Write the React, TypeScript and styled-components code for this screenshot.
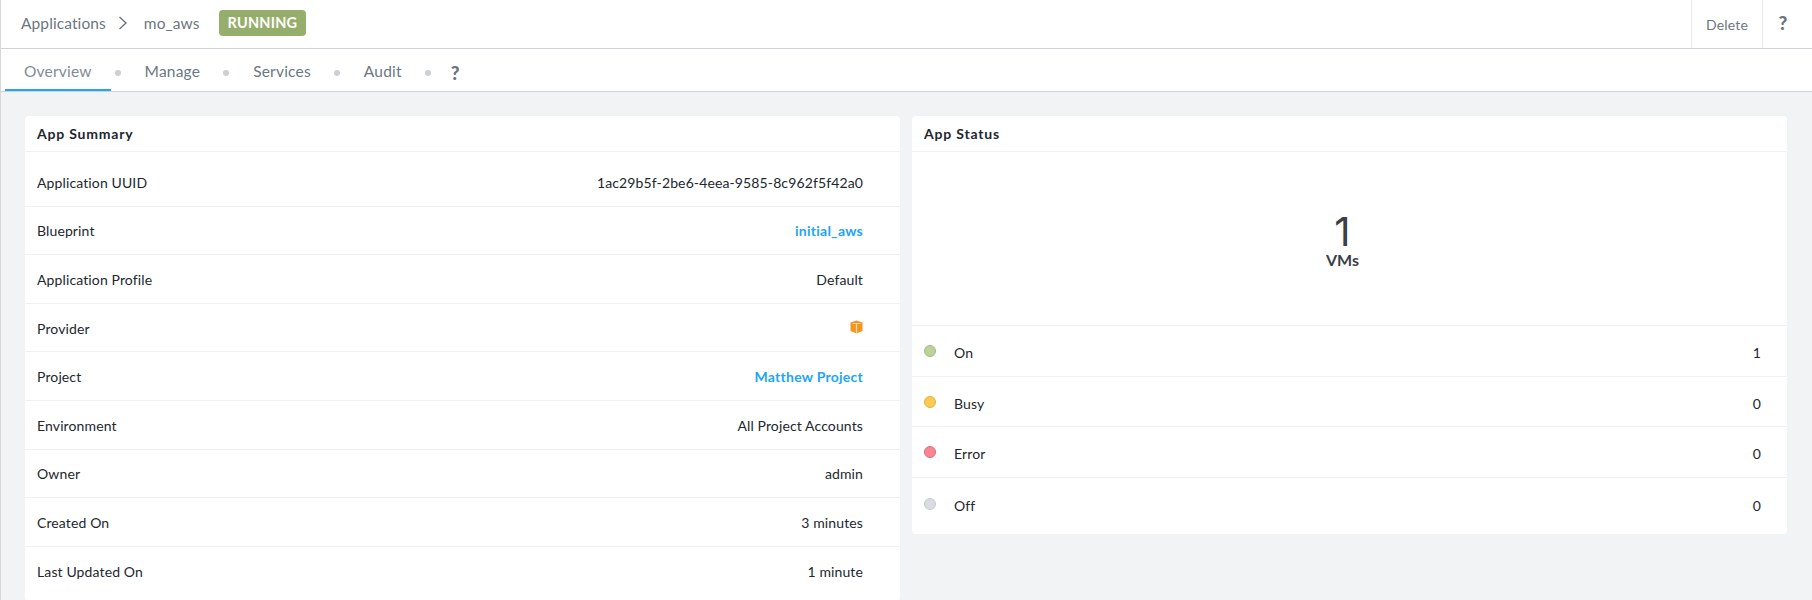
import React from 'react';
import styled, { createGlobalStyle } from 'styled-components';

const GlobalStyle = createGlobalStyle`
  html, body {
    margin: 0;
    padding: 0;
    height: 100%;
    overflow: hidden;
    background: #f2f3f5;
    font-family: Lato, "Open Sans", sans-serif;
  }
`;

const Page = styled.div`
  width: 1812px;
  height: 600px;
  overflow: hidden;
  border-left: 1px solid #d5d9dd;
  box-sizing: border-box;
`;

const TopBar = styled.div`
  display: flex;
  align-items: stretch;
  height: 49px;
  box-sizing: border-box;
  background: #fff;
  border-bottom: 1px solid #cfd3d7;
`;

const Crumbs = styled.div`
  display: flex;
  flex: 1;
  align-items: center;
  padding: 0 0 2px 20px;
  font-size: 15.5px;
  letter-spacing: 0.1px;
  color: #6c7680;
`;

const Chevron = styled.svg`
  width: 10px;
  height: 14px;
  margin: 0 16px 0 12px;
  fill: none;
  stroke: #6c7680;
  stroke-width: 1.4;
`;

const Badge = styled.span`
  margin-left: 19px;
  padding: 0 9px;
  height: 26px;
  line-height: 26px;
  border-radius: 4px;
  background: #96ae6c;
  color: #fff;
  font-size: 14.5px;
  font-weight: 700;
  letter-spacing: 0.2px;
`;

const TopAction = styled.div<{ $w: number; $shift?: number }>`
  display: flex;
  align-items: center;
  justify-content: center;
  width: ${(p) => p.$w}px;
  box-sizing: border-box;
  padding-right: ${(p) => p.$shift ?? 0}px;
  border-left: 1px solid #e8eaed;
  color: #6c7680;
  font-size: 14px;
  letter-spacing: 0.2px;
`;

const Help = styled.span`
  font-size: 19px;
  font-weight: 900;
  color: #6c7680;
  margin-bottom: 3px;
`;

const TabBar = styled.div`
  display: flex;
  align-items: stretch;
  height: 43px;
  box-sizing: border-box;
  padding-left: 4px;
  background: #fff;
  border-bottom: 1px solid #cfd3d7;
`;

const Tab = styled.div<{ $active?: boolean }>`
  display: flex;
  align-items: center;
  height: 42px;
  box-sizing: border-box;
  padding: 3px 19px 0;
  font-size: 15.5px;
  letter-spacing: 0.2px;
  color: ${(p) => (p.$active ? '#7f8b96' : '#6a7784')};
  border-bottom: ${(p) => (p.$active ? '2px solid #22a5f7' : '2px solid transparent')};
`;

const HelpTab = styled(Tab)`
  padding: 6px 0 0 15px;
  ${Help} {
    margin-bottom: 0;
  }
`;

const TabDot = styled.span`
  align-self: center;
  width: 6px;
  height: 6px;
  margin: 6px 5px 0 4px;
  border-radius: 50%;
  background: #ccd0d4;
`;

const Content = styled.div`
  display: grid;
  grid-template-columns: 875px 875px;
  gap: 12px;
  align-items: start;
  padding: 24px 0 0 24px;
`;

const Card = styled.div`
  background: #fff;
  border-radius: 4px;
`;

const CardTitle = styled.div`
  display: flex;
  align-items: center;
  height: 35px;
  padding: 0 12px;
  border-bottom: 1px solid #f0f1f3;
  font-size: 14px;
  font-weight: 700;
  letter-spacing: 0.8px;
  color: #22272e;
`;

const SummaryList = styled.div`
  padding-top: 6px;
`;

const SummaryRow = styled.div`
  display: flex;
  justify-content: space-between;
  align-items: center;
  height: 48.6px;
  box-sizing: border-box;
  padding: 1px 37px 0 12px;
  border-bottom: 1px solid #f0f1f3;
  font-size: 14px;
  letter-spacing: 0.12px;
  color: #22272e;
  &:last-child {
    height: 54px;
    padding-bottom: 5px;
    border-bottom: none;
  }
`;

const ValueLink = styled.span`
  color: #22a5f7;
  font-weight: 700;
  letter-spacing: 0.25px;
`;

const Total = styled.div`
  display: flex;
  flex-direction: column;
  align-items: center;
  justify-content: center;
  height: 174px;
  box-sizing: border-box;
  padding: 0 14px 3px 0;
  border-bottom: 1px solid #f0f1f3;
  color: #3a4046;
`;

const TotalValue = styled.div`
  padding-top: 10px;
  font-family: Inter, sans-serif;
  font-size: 40px;
  line-height: 36px;
  font-weight: 400;
`;

const TotalLabel = styled.div`
  font-size: 16px;
  font-weight: 700;
  line-height: 20px;
`;

const StatusRow = styled.div`
  display: flex;
  align-items: center;
  height: 50.7px;
  box-sizing: border-box;
  padding: 3px 26px 0 12px;
  border-bottom: 1px solid #f0f1f3;
  font-size: 14px;
  letter-spacing: 0.12px;
  color: #22272e;
  &:last-child {
    height: 56px;
    padding-bottom: 5px;
    border-bottom: none;
  }
`;

const StatusDot = styled.span<{ $bg: string; $line: string }>`
  width: 12px;
  height: 12px;
  box-sizing: border-box;
  margin: 0 18px 3px 0;
  border-radius: 50%;
  background: ${(p) => p.$bg};
  border: 1px solid ${(p) => p.$line};
`;

const StatusName = styled.span`
  flex: 1;
`;

const summary: [string, React.ReactNode][] = [
  ['Application UUID', '1ac29b5f-2be6-4eea-9585-8c962f5f42a0'],
  ['Blueprint', <ValueLink>initial_aws</ValueLink>],
  ['Application Profile', 'Default'],
  [
    'Provider',
    <svg width="13" height="14" viewBox="0 0 13 14">
      <path d="M6.5 0.5L12.5 2.5V11L6.5 13.5L0.5 11V2.5Z" fill="#f7941e" />
      <path d="M2.5 3.5H10.5M6.5 3.5V13" stroke="#fde0b8" strokeWidth="1.2" fill="none" />
    </svg>,
  ],
  ['Project', <ValueLink>Matthew Project</ValueLink>],
  ['Environment', 'All Project Accounts'],
  ['Owner', 'admin'],
  ['Created On', '3 minutes'],
  ['Last Updated On', '1 minute'],
];

const statuses = [
  { name: 'On', count: 1, bg: '#bdd29b', line: '#a3bb7d' },
  { name: 'Busy', count: 0, bg: '#fdc94f', line: '#e3b044' },
  { name: 'Error', count: 0, bg: '#fb8591', line: '#db6e79' },
  { name: 'Off', count: 0, bg: '#d9dde1', line: '#c6cacf' },
];

const tabs = ['Overview', 'Manage', 'Services', 'Audit'];

export default function App() {
  return (
    <Page>
      <GlobalStyle />
      <TopBar>
        <Crumbs>
          Applications
          <Chevron viewBox="0 0 10 14">
            <path d="M1.5 1L8 7L1.5 13" />
          </Chevron>
          mo_aws
          <Badge>RUNNING</Badge>
        </Crumbs>
        <TopAction $w={71}>Delete</TopAction>
        <TopAction $w={50} $shift={9}>
          <Help>?</Help>
        </TopAction>
      </TopBar>
      <TabBar>
        {tabs.map((t, i) => (
          <React.Fragment key={t}>
            <Tab $active={i === 0}>{t}</Tab>
            <TabDot />
          </React.Fragment>
        ))}
        <HelpTab>
          <Help>?</Help>
        </HelpTab>
      </TabBar>
      <Content>
        <Card>
          <CardTitle>App Summary</CardTitle>
          <SummaryList>
            {summary.map(([label, value]) => (
              <SummaryRow key={label}>
                <span>{label}</span>
                <span>{value}</span>
              </SummaryRow>
            ))}
          </SummaryList>
        </Card>
        <Card>
          <CardTitle>App Status</CardTitle>
          <Total>
            <TotalValue>1</TotalValue>
            <TotalLabel>VMs</TotalLabel>
          </Total>
          {statuses.map((s) => (
            <StatusRow key={s.name}>
              <StatusDot $bg={s.bg} $line={s.line} />
              <StatusName>{s.name}</StatusName>
              {s.count}
            </StatusRow>
          ))}
        </Card>
      </Content>
    </Page>
  );
}
